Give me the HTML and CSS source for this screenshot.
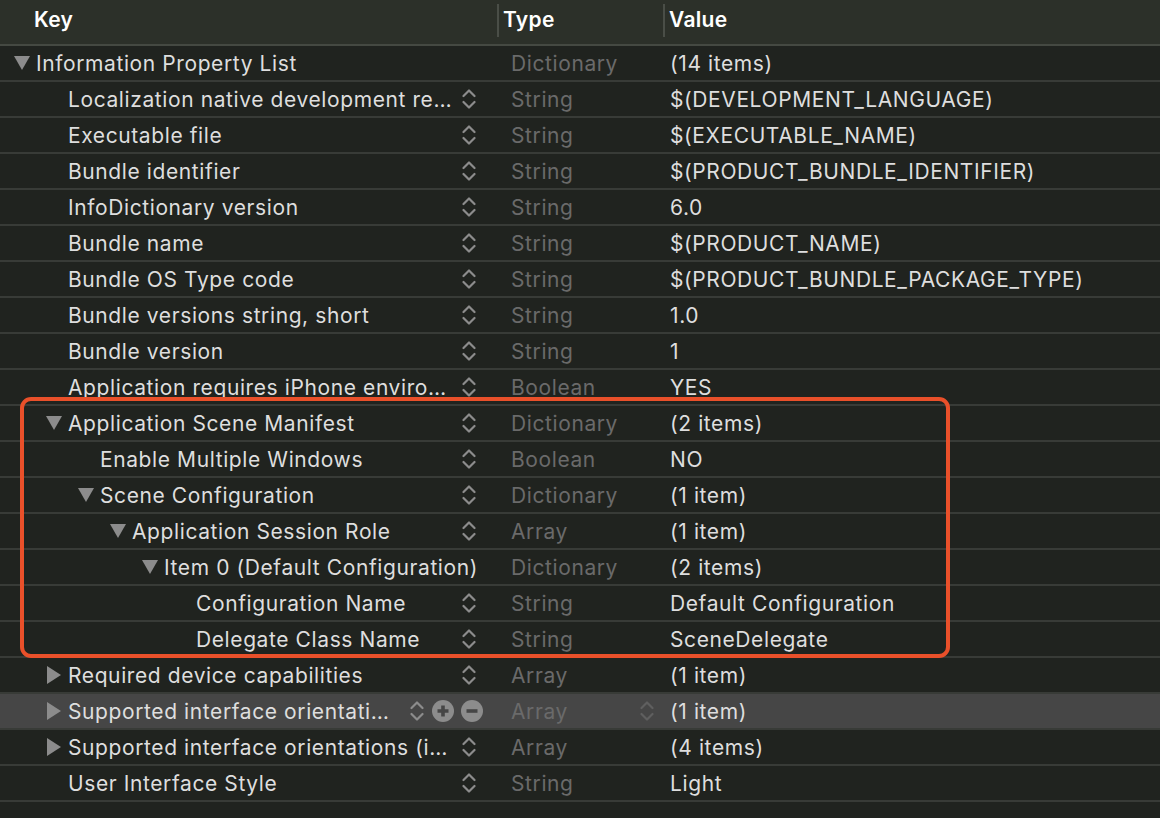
FILE: index.html
```html
<!DOCTYPE html>
<html>
<head>
<meta charset="utf-8">
<link rel="stylesheet" href="styles.css">
</head>
<body>
<div class="plist">
  <div class="head">
    <div class="hkey">Key</div>
    <div class="hdiv"></div>
    <div class="htype">Type</div>
    <div class="hdiv"></div>
    <div class="hval">Value</div>
  </div>

  <div class="row">
    <div class="key l0"><span class="disc"><svg width="16" height="16" viewBox="0 0 16 16"><polygon points="0,1 16,1 8,15" class="tri"/></svg></span><span class="ktext">Information Property List</span></div>
    <div class="type">Dictionary</div><div class="value">(14 items)</div>
  </div>
  <div class="row">
    <div class="key l1"><span class="disc"></span><span class="ktext">Localization native development region</span><span class="ctrl"><svg class="step" width="14" height="24" viewBox="0 0 14 24"><path d="M1.5 9 L7 3.5 L12.5 9 M1.5 15 L7 20.5 L12.5 15"/></svg></span></div>
    <div class="type">String</div><div class="value">$(DEVELOPMENT_LANGUAGE)</div>
  </div>
  <div class="row">
    <div class="key l1"><span class="disc"></span><span class="ktext">Executable file</span><span class="ctrl"><svg class="step" width="14" height="24" viewBox="0 0 14 24"><path d="M1.5 9 L7 3.5 L12.5 9 M1.5 15 L7 20.5 L12.5 15"/></svg></span></div>
    <div class="type">String</div><div class="value">$(EXECUTABLE_NAME)</div>
  </div>
  <div class="row">
    <div class="key l1"><span class="disc"></span><span class="ktext">Bundle identifier</span><span class="ctrl"><svg class="step" width="14" height="24" viewBox="0 0 14 24"><path d="M1.5 9 L7 3.5 L12.5 9 M1.5 15 L7 20.5 L12.5 15"/></svg></span></div>
    <div class="type">String</div><div class="value">$(PRODUCT_BUNDLE_IDENTIFIER)</div>
  </div>
  <div class="row">
    <div class="key l1"><span class="disc"></span><span class="ktext">InfoDictionary version</span><span class="ctrl"><svg class="step" width="14" height="24" viewBox="0 0 14 24"><path d="M1.5 9 L7 3.5 L12.5 9 M1.5 15 L7 20.5 L12.5 15"/></svg></span></div>
    <div class="type">String</div><div class="value">6.0</div>
  </div>
  <div class="row">
    <div class="key l1"><span class="disc"></span><span class="ktext">Bundle name</span><span class="ctrl"><svg class="step" width="14" height="24" viewBox="0 0 14 24"><path d="M1.5 9 L7 3.5 L12.5 9 M1.5 15 L7 20.5 L12.5 15"/></svg></span></div>
    <div class="type">String</div><div class="value">$(PRODUCT_NAME)</div>
  </div>
  <div class="row">
    <div class="key l1"><span class="disc"></span><span class="ktext">Bundle OS Type code</span><span class="ctrl"><svg class="step" width="14" height="24" viewBox="0 0 14 24"><path d="M1.5 9 L7 3.5 L12.5 9 M1.5 15 L7 20.5 L12.5 15"/></svg></span></div>
    <div class="type">String</div><div class="value">$(PRODUCT_BUNDLE_PACKAGE_TYPE)</div>
  </div>
  <div class="row">
    <div class="key l1"><span class="disc"></span><span class="ktext">Bundle versions string, short</span><span class="ctrl"><svg class="step" width="14" height="24" viewBox="0 0 14 24"><path d="M1.5 9 L7 3.5 L12.5 9 M1.5 15 L7 20.5 L12.5 15"/></svg></span></div>
    <div class="type">String</div><div class="value">1.0</div>
  </div>
  <div class="row">
    <div class="key l1"><span class="disc"></span><span class="ktext">Bundle version</span><span class="ctrl"><svg class="step" width="14" height="24" viewBox="0 0 14 24"><path d="M1.5 9 L7 3.5 L12.5 9 M1.5 15 L7 20.5 L12.5 15"/></svg></span></div>
    <div class="type">String</div><div class="value">1</div>
  </div>
  <div class="row">
    <div class="key l1"><span class="disc"></span><span class="ktext">Application requires iPhone environment</span><span class="ctrl"><svg class="step" width="14" height="24" viewBox="0 0 14 24"><path d="M1.5 9 L7 3.5 L12.5 9 M1.5 15 L7 20.5 L12.5 15"/></svg></span></div>
    <div class="type">Boolean</div><div class="value">YES</div>
  </div>

  <div class="group">
    <div class="row">
      <div class="key l1"><span class="disc"><svg width="16" height="16" viewBox="0 0 16 16"><polygon points="0,1 16,1 8,15" class="tri"/></svg></span><span class="ktext">Application Scene Manifest</span><span class="ctrl"><svg class="step" width="14" height="24" viewBox="0 0 14 24"><path d="M1.5 9 L7 3.5 L12.5 9 M1.5 15 L7 20.5 L12.5 15"/></svg></span></div>
      <div class="type">Dictionary</div><div class="value">(2 items)</div>
    </div>
    <div class="row">
      <div class="key l2"><span class="disc"></span><span class="ktext">Enable Multiple Windows</span><span class="ctrl"><svg class="step" width="14" height="24" viewBox="0 0 14 24"><path d="M1.5 9 L7 3.5 L12.5 9 M1.5 15 L7 20.5 L12.5 15"/></svg></span></div>
      <div class="type">Boolean</div><div class="value">NO</div>
    </div>
    <div class="row">
      <div class="key l2"><span class="disc"><svg width="16" height="16" viewBox="0 0 16 16"><polygon points="0,1 16,1 8,15" class="tri"/></svg></span><span class="ktext">Scene Configuration</span><span class="ctrl"><svg class="step" width="14" height="24" viewBox="0 0 14 24"><path d="M1.5 9 L7 3.5 L12.5 9 M1.5 15 L7 20.5 L12.5 15"/></svg></span></div>
      <div class="type">Dictionary</div><div class="value">(1 item)</div>
    </div>
    <div class="row">
      <div class="key l3"><span class="disc"><svg width="16" height="16" viewBox="0 0 16 16"><polygon points="0,1 16,1 8,15" class="tri"/></svg></span><span class="ktext">Application Session Role</span><span class="ctrl"><svg class="step" width="14" height="24" viewBox="0 0 14 24"><path d="M1.5 9 L7 3.5 L12.5 9 M1.5 15 L7 20.5 L12.5 15"/></svg></span></div>
      <div class="type">Array</div><div class="value">(1 item)</div>
    </div>
    <div class="row">
      <div class="key l4 nostep"><span class="disc"><svg width="16" height="16" viewBox="0 0 16 16"><polygon points="0,1 16,1 8,15" class="tri"/></svg></span><span class="ktext">Item 0 (Default Configuration)</span></div>
      <div class="type">Dictionary</div><div class="value">(2 items)</div>
    </div>
    <div class="row">
      <div class="key l5"><span class="disc"></span><span class="ktext">Configuration Name</span><span class="ctrl"><svg class="step" width="14" height="24" viewBox="0 0 14 24"><path d="M1.5 9 L7 3.5 L12.5 9 M1.5 15 L7 20.5 L12.5 15"/></svg></span></div>
      <div class="type">String</div><div class="value">Default Configuration</div>
    </div>
    <div class="row">
      <div class="key l5"><span class="disc"></span><span class="ktext">Delegate Class Name</span><span class="ctrl"><svg class="step" width="14" height="24" viewBox="0 0 14 24"><path d="M1.5 9 L7 3.5 L12.5 9 M1.5 15 L7 20.5 L12.5 15"/></svg></span></div>
      <div class="type">String</div><div class="value">SceneDelegate</div>
    </div>
  </div>

  <div class="row">
    <div class="key l1"><span class="disc"><svg width="16" height="18" viewBox="0 0 16 18"><polygon points="1,0 15,9 1,18" class="tri"/></svg></span><span class="ktext">Required device capabilities</span><span class="ctrl"><svg class="step" width="14" height="24" viewBox="0 0 14 24"><path d="M1.5 9 L7 3.5 L12.5 9 M1.5 15 L7 20.5 L12.5 15"/></svg></span></div>
    <div class="type">Array</div><div class="value">(1 item)</div>
  </div>
  <div class="row selected">
    <div class="key l1"><span class="disc"><svg width="16" height="18" viewBox="0 0 16 18"><polygon points="1,0 15,9 1,18" class="tri"/></svg></span><span class="ktext">Supported interface orientations</span><span class="ctrl wide"><svg class="step" width="14" height="24" viewBox="0 0 14 24"><path d="M1.5 9 L7 3.5 L12.5 9 M1.5 15 L7 20.5 L12.5 15"/></svg><svg class="pm" width="22" height="22" viewBox="0 0 22 22"><circle cx="11" cy="11" r="11"/><path d="M5.5 11 H16.5 M11 5.5 V16.5"/></svg><svg class="pm" width="22" height="22" viewBox="0 0 22 22"><circle cx="11" cy="11" r="11"/><path d="M5.5 11 H16.5"/></svg></span></div>
    <div class="type"><span class="tname">Array</span><svg class="step dim" width="14" height="24" viewBox="0 0 14 24"><path d="M1.5 9 L7 3.5 L12.5 9 M1.5 15 L7 20.5 L12.5 15"/></svg></div><div class="value">(1 item)</div>
  </div>
  <div class="row">
    <div class="key l1"><span class="disc"><svg width="16" height="18" viewBox="0 0 16 18"><polygon points="1,0 15,9 1,18" class="tri"/></svg></span><span class="ktext">Supported interface orientations (iPad)</span><span class="ctrl"><svg class="step" width="14" height="24" viewBox="0 0 14 24"><path d="M1.5 9 L7 3.5 L12.5 9 M1.5 15 L7 20.5 L12.5 15"/></svg></span></div>
    <div class="type">Array</div><div class="value">(4 items)</div>
  </div>
  <div class="row">
    <div class="key l1"><span class="disc"></span><span class="ktext">User Interface Style</span><span class="ctrl"><svg class="step" width="14" height="24" viewBox="0 0 14 24"><path d="M1.5 9 L7 3.5 L12.5 9 M1.5 15 L7 20.5 L12.5 15"/></svg></span></div>
    <div class="type">String</div><div class="value">Light</div>
  </div>
</div>
</body>
</html>
```
FILE: styles.css
```css
* { box-sizing: border-box; }
html, body {
  margin: 0;
  padding: 0;
  background: #20231f;
  width: 1160px;
  height: 818px;
  overflow: hidden;
}
.plist {
  font-family: "Inter", "Liberation Sans", sans-serif;
  font-size: 21px;
  letter-spacing: 0.6px;
  color: #dedede;
}
.head {
  display: flex;
  align-items: flex-start;
  height: 46px;
  background: #2c3029;
  border-bottom: 2px solid #454942;
  color: #ffffff;
  font-weight: 600;
  letter-spacing: 0.3px;
}
.hkey { width: 497px; padding-left: 34px; line-height: 40px; }
.hdiv { width: 2px; height: 33px; margin-top: 4px; background: #4a4e47; }
.htype { width: 164px; padding-left: 4px; line-height: 40px; }
.hval { padding-left: 4px; line-height: 40px; }

.row {
  display: flex;
  height: 36px;
  border-bottom: 2px solid #383b37;
  align-items: center;
}
.row.selected { background: #464646; }
.key {
  width: 497px;
  display: flex;
  align-items: center;
  padding-right: 21px;
  height: 100%;
}
.key.nostep { padding-right: 8px; }
.l0 { padding-left: 14px; }
.l1 { padding-left: 46px; }
.l2 { padding-left: 78px; }
.l3 { padding-left: 110px; }
.l4 { padding-left: 142px; }
.l5 { padding-left: 174px; }
.disc {
  width: 22px;
  flex: none;
  display: flex;
  align-items: center;
}
.tri { fill: #8c8c8c; }
.ktext {
  flex: 1;
  min-width: 0;
  white-space: nowrap;
  overflow: hidden;
  text-overflow: ellipsis;
}
.ctrl {
  flex: none;
  display: flex;
  align-items: center;
  margin-left: 8px;
}
.key .ctrl.wide { gap: 8px; margin-left: 16px; margin-right: -7px; }
.step { display: block; }
.step path { fill: none; stroke: #8c8c8c; stroke-width: 2.2; stroke-linecap: round; stroke-linejoin: round; }
.step.dim path { stroke: #5f5f5f; }
.pm circle { fill: #8c8c8c; }
.pm path { stroke: #464646; stroke-width: 3.6; fill: none; }
.selected .ctrl .pm + .pm { margin-left: -1px; }
.type {
  width: 166px;
  padding-left: 14px;
  padding-right: 9px;
  color: #6a6a6a;
  display: flex;
  align-items: center;
  white-space: nowrap;
}
.tname { flex: 1; }
.value { padding-left: 7px; white-space: nowrap; }

.group { position: relative; }
.group::after {
  content: "";
  position: absolute;
  left: 20px;
  width: 922px;
  top: -9px;
  bottom: 0;
  border: 4px solid #e9502a;
  border-radius: 11px;
  pointer-events: none;
}
```
